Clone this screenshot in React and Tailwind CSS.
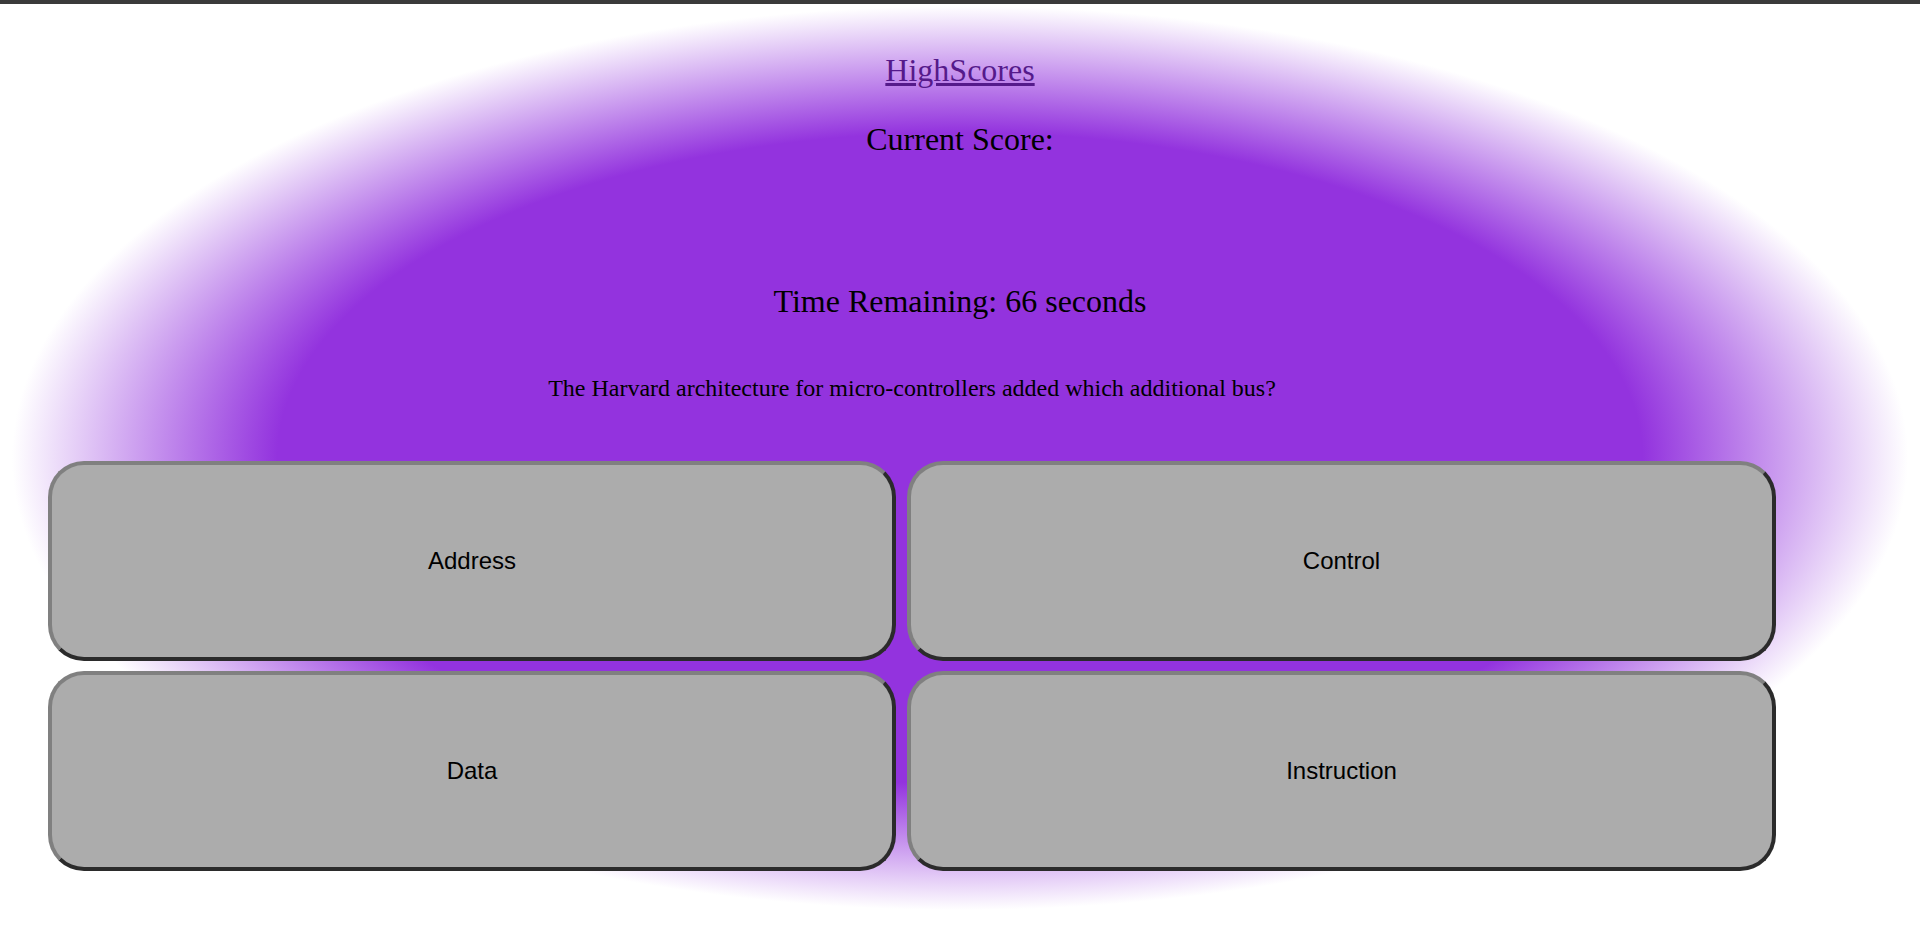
const answers = ["Address", "Control", "Data", "Instruction"];

const App = () => {
  return (
    <div className="w-full min-h-screen bg-white" style={{ fontFamily: '"Liberation Serif", serif' }}>
      <div className="h-[4px] bg-[#3a3a3a]" />

      <div className="w-full h-[908px] flex flex-col items-center pt-[48px] bg-[radial-gradient(ellipse_948px_452px_at_50%_50%,#9333de_72%,#ffffff_100%)]">
        <a href="#" className="text-[32px] leading-[37px] text-[#551a8b] underline">
          HighScores
        </a>

        <h2 className="mt-[32px] text-[32px] leading-[37px] text-black">Current Score:</h2>

        <h2 className="mt-[125px] text-[32px] leading-[37px] text-black">Time Remaining: 66 seconds</h2>

        {/* question + answers sit in their own block, offset from the page centre */}
        <div className="self-start ml-[48px] w-[1728px] mt-[54px]">
          <p className="text-center text-[24px] leading-[28px] text-black">
            The Harvard architecture for micro-controllers added which additional bus?
          </p>

          <div className="mt-[59px] grid grid-cols-[848px_869px] grid-rows-[200px_200px] gap-x-[11px] gap-y-[10px]">
            {answers.map((answer) => (
              <button
                key={answer}
                className="flex items-center justify-center bg-[#acacac] rounded-[36px] border-4 border-t-[#808080] border-l-[#808080] border-b-[#2b2b2b] border-r-[#2b2b2b] text-[24px] text-black"
                style={{ fontFamily: '"Liberation Sans", Arial, sans-serif' }}
              >
                {answer}
              </button>
            ))}
          </div>
        </div>
      </div>
    </div>
  );
};

export default App;
